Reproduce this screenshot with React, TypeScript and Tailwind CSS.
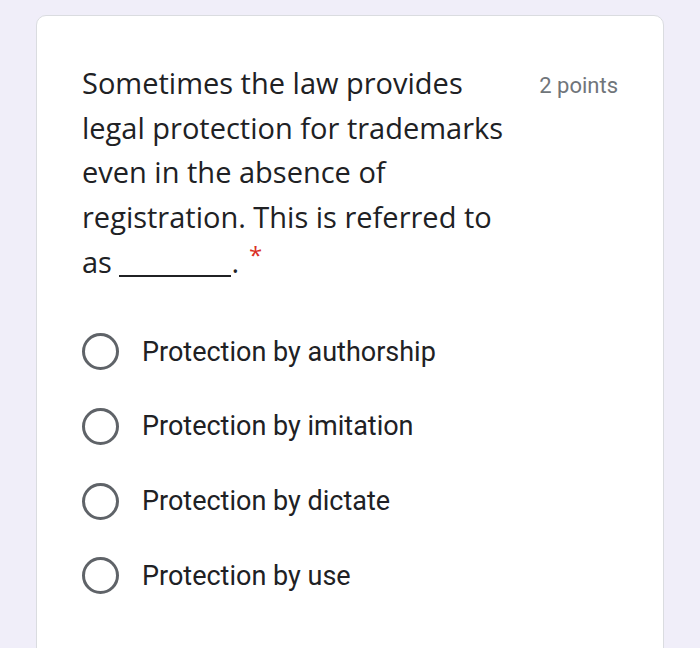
import React from "react";

const options = [
  "Protection by authorship",
  "Protection by imitation",
  "Protection by dictate",
  "Protection by use",
];

export default function App() {
  return (
    <div className="w-[700px] h-[648px] overflow-hidden bg-[#f0eef9] pt-[15px] pl-[36px]" style={{ fontFamily: "Roboto, 'Noto Sans', sans-serif" }}>
      <div className="w-[628px] h-[700px] bg-white border border-[#dadce0] rounded-[10px] pl-[45px] pr-[45px] pt-[45px]">
        <div className="flex items-start">
          <div className="w-[450px] text-[29px] leading-[44.7px] text-[#202124] whitespace-nowrap" style={{ fontFamily: "'Open Sans', Roboto, sans-serif" }}>
            Sometimes the law provides<br />
            legal protection for trademarks<br />
            even in the absence of<br />
            registration. This is referred to<br />
            as <span className="inline-block w-[112px] h-[28px] border-b-2 border-[#202124] align-[-4px]" />.
            <span className="text-[#d93025] text-[24px] align-top pl-[10px] leading-[30px]">*</span>
          </div>
          <div className="ml-auto text-[22px] text-[#70757a] mt-[10px] leading-[30px]">2 points</div>
        </div>
        <div className="mt-[30px] flex flex-col">
          {options.map((o) => (
            <div key={o} className="h-[74.7px] flex items-center">
              <div className="w-[37px] h-[37px] rounded-full border-[3px] border-[#5f6368] shrink-0" />
              <div className="ml-[23px] text-[27px] text-[#202124]">{o}</div>
            </div>
          ))}
        </div>
      </div>
    </div>
  );
}
